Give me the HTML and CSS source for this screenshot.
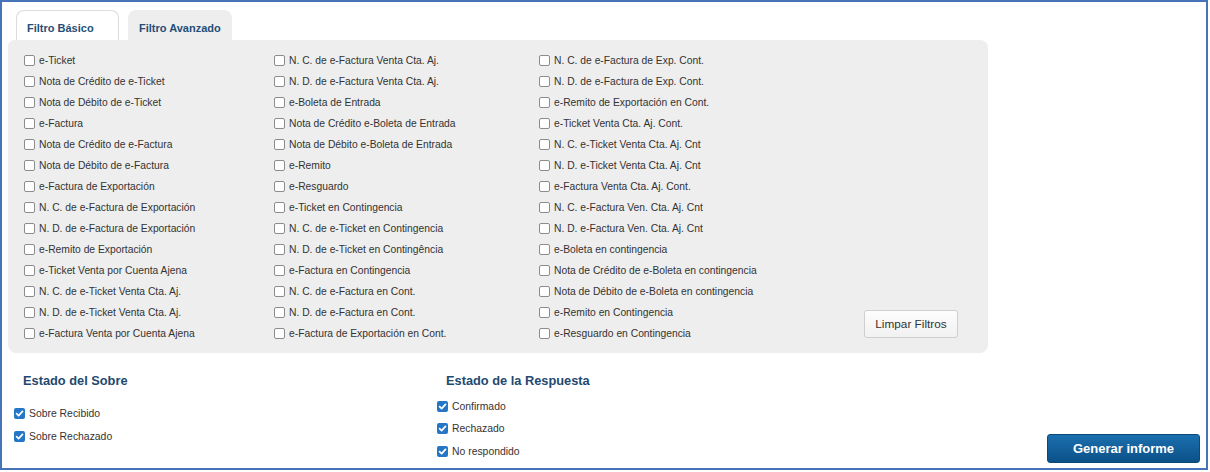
FILE: index.html
```html
<!DOCTYPE html>
<html lang="es">
<head>
<meta charset="utf-8">
<title>Filtros</title>
<link rel="stylesheet" href="styles.css">
</head>
<body>
<div class="frame">
  <div class="tabs">
    <div class="tab">Filtro Básico</div>
    <div class="tab active">Filtro Avanzado</div>
  </div>
  <div class="panel">
    <div class="col c1">
      <label class="opt"><input type="checkbox"><span>e-Ticket</span></label>
      <label class="opt"><input type="checkbox"><span>Nota de Crédito de e-Ticket</span></label>
      <label class="opt"><input type="checkbox"><span>Nota de Débito de e-Ticket</span></label>
      <label class="opt"><input type="checkbox"><span>e-Factura</span></label>
      <label class="opt"><input type="checkbox"><span>Nota de Crédito de e-Factura</span></label>
      <label class="opt"><input type="checkbox"><span>Nota de Débito de e-Factura</span></label>
      <label class="opt"><input type="checkbox"><span>e-Factura de Exportación</span></label>
      <label class="opt"><input type="checkbox"><span>N. C. de e-Factura de Exportación</span></label>
      <label class="opt"><input type="checkbox"><span>N. D. de e-Factura de Exportación</span></label>
      <label class="opt"><input type="checkbox"><span>e-Remito de Exportación</span></label>
      <label class="opt"><input type="checkbox"><span>e-Ticket Venta por Cuenta Ajena</span></label>
      <label class="opt"><input type="checkbox"><span>N. C. de e-Ticket Venta Cta. Aj.</span></label>
      <label class="opt"><input type="checkbox"><span>N. D. de e-Ticket Venta Cta. Aj.</span></label>
      <label class="opt"><input type="checkbox"><span>e-Factura Venta por Cuenta Ajena</span></label>
    </div>
    <div class="col c2">
      <label class="opt"><input type="checkbox"><span>N. C. de e-Factura Venta Cta. Aj.</span></label>
      <label class="opt"><input type="checkbox"><span>N. D. de e-Factura Venta Cta. Aj.</span></label>
      <label class="opt"><input type="checkbox"><span>e-Boleta de Entrada</span></label>
      <label class="opt"><input type="checkbox"><span>Nota de Crédito e-Boleta de Entrada</span></label>
      <label class="opt"><input type="checkbox"><span>Nota de Débito e-Boleta de Entrada</span></label>
      <label class="opt"><input type="checkbox"><span>e-Remito</span></label>
      <label class="opt"><input type="checkbox"><span>e-Resguardo</span></label>
      <label class="opt"><input type="checkbox"><span>e-Ticket en Contingencia</span></label>
      <label class="opt"><input type="checkbox"><span>N. C. de e-Ticket en Contingencia</span></label>
      <label class="opt"><input type="checkbox"><span>N. D. de e-Ticket en Contingência</span></label>
      <label class="opt"><input type="checkbox"><span>e-Factura en Contingencia</span></label>
      <label class="opt"><input type="checkbox"><span>N. C. de e-Factura en Cont.</span></label>
      <label class="opt"><input type="checkbox"><span>N. D. de e-Factura en Cont.</span></label>
      <label class="opt"><input type="checkbox"><span>e-Factura de Exportación en Cont.</span></label>
    </div>
    <div class="col c3">
      <label class="opt"><input type="checkbox"><span>N. C. de e-Factura de Exp. Cont.</span></label>
      <label class="opt"><input type="checkbox"><span>N. D. de e-Factura de Exp. Cont.</span></label>
      <label class="opt"><input type="checkbox"><span>e-Remito de Exportación en Cont.</span></label>
      <label class="opt"><input type="checkbox"><span>e-Ticket Venta Cta. Aj. Cont.</span></label>
      <label class="opt"><input type="checkbox"><span>N. C. e-Ticket Venta Cta. Aj. Cnt</span></label>
      <label class="opt"><input type="checkbox"><span>N. D. e-Ticket Venta Cta. Aj. Cnt</span></label>
      <label class="opt"><input type="checkbox"><span>e-Factura Venta Cta. Aj. Cont.</span></label>
      <label class="opt"><input type="checkbox"><span>N. C. e-Factura Ven. Cta. Aj. Cnt</span></label>
      <label class="opt"><input type="checkbox"><span>N. D. e-Factura Ven. Cta. Aj. Cnt</span></label>
      <label class="opt"><input type="checkbox"><span>e-Boleta en contingencia</span></label>
      <label class="opt"><input type="checkbox"><span>Nota de Crédito de e-Boleta en contingencia</span></label>
      <label class="opt"><input type="checkbox"><span>Nota de Débito de e-Boleta en contingencia</span></label>
      <label class="opt"><input type="checkbox"><span>e-Remito en Contingencia</span></label>
      <label class="opt"><input type="checkbox"><span>e-Resguardo en Contingencia</span></label>
    </div>
    <button class="btn-clear" type="button">Limpar Filtros</button>
  </div>
  <div class="bottom">
    <div class="group g-sobre">
      <h3 class="title">Estado del Sobre</h3>
      <div class="checks">
        <label class="chk"><span class="box"><svg viewBox="0 0 11 11" width="11" height="11"><path d="M2.6 5.7 L4.6 7.6 L8.5 3.4" fill="none" stroke="#fff" stroke-width="1.7" stroke-linecap="round" stroke-linejoin="round"/></svg></span><span>Sobre Recibido</span></label>
        <label class="chk"><span class="box"><svg viewBox="0 0 11 11" width="11" height="11"><path d="M2.6 5.7 L4.6 7.6 L8.5 3.4" fill="none" stroke="#fff" stroke-width="1.7" stroke-linecap="round" stroke-linejoin="round"/></svg></span><span>Sobre Rechazado</span></label>
      </div>
    </div>
    <div class="group g-resp">
      <h3 class="title">Estado de la Respuesta</h3>
      <div class="checks">
        <label class="chk"><span class="box"><svg viewBox="0 0 11 11" width="11" height="11"><path d="M2.6 5.7 L4.6 7.6 L8.5 3.4" fill="none" stroke="#fff" stroke-width="1.7" stroke-linecap="round" stroke-linejoin="round"/></svg></span><span>Confirmado</span></label>
        <label class="chk"><span class="box"><svg viewBox="0 0 11 11" width="11" height="11"><path d="M2.6 5.7 L4.6 7.6 L8.5 3.4" fill="none" stroke="#fff" stroke-width="1.7" stroke-linecap="round" stroke-linejoin="round"/></svg></span><span>Rechazado</span></label>
        <label class="chk"><span class="box"><svg viewBox="0 0 11 11" width="11" height="11"><path d="M2.6 5.7 L4.6 7.6 L8.5 3.4" fill="none" stroke="#fff" stroke-width="1.7" stroke-linecap="round" stroke-linejoin="round"/></svg></span><span>No respondido</span></label>
      </div>
    </div>
    <button class="btn-gen" type="button">Generar informe</button>
  </div>
</div>
</body>
</html>
```
FILE: styles.css
```css
* { box-sizing: border-box; }
html, body { margin: 0; padding: 0; background: #fff; }
body {
  font-family: "Liberation Sans", Arial, sans-serif;
  color: #333;
  width: 1210px;
  height: 472px;
  overflow: hidden;
}
.frame {
  width: 1208px;
  height: 470px;
  border: 2px solid #4773b9;
  padding: 8px 0 0 6px;
  display: flex;
  flex-direction: column;
}
.tabs {
  display: flex;
  gap: 9px;
  margin-left: 8px;
  height: 30px;
}
.tab {
  width: 103px;
  height: 30px;
  border: 1px solid #dcdcdc;
  border-bottom: none;
  border-radius: 8px 8px 0 0;
  background: #fff;
  font-size: 11px;
  font-weight: bold;
  color: #1f4f78;
  padding: 11px 0 0 10px;
  line-height: 12px;
}
.tab.active {
  width: 104px;
  background: #eeeeee;
  border-color: #eeeeee;
}
.panel {
  width: 980px;
  height: 313px;
  background: #eeeeee;
  border-radius: 6px 8px 8px 8px;
  padding: 10px 30px 9px 16px;
  display: flex;
  align-items: flex-start;
}
.col { display: flex; flex-direction: column; }
.c1 { width: 250px; }
.c2 { width: 265px; }
.c3 { width: 260px; }
.opt {
  height: 21px;
  display: flex;
  align-items: center;
  font-size: 10.3px;
  color: #333;
  white-space: nowrap;
}
.opt input {
  appearance: none;
  -webkit-appearance: none;
  margin: 0 4px 0 0;
  width: 11px;
  height: 11px;
  border: 1px solid #8c8c8c;
  border-radius: 2px;
  background: #fff;
  flex: none;
}
.btn-clear {
  margin-left: auto;
  align-self: flex-end;
  margin-bottom: 6px;
  width: 94px;
  height: 28px;
  background: linear-gradient(#fdfdfd, #f1f1f1);
  border: 1px solid #cfcfcf;
  border-radius: 3px;
  font-family: "Liberation Sans", Arial, sans-serif;
  font-size: 11.8px;
  color: #333;
  padding: 0;
}
.bottom {
  flex: 1;
  display: flex;
  align-items: flex-start;
  padding-left: 6px;
}
.group { display: flex; flex-direction: column; }
.g-sobre { width: 423px; }
.title {
  margin: 20px 0 0 0;
  padding-left: 9px;
  font-size: 12.8px;
  line-height: 16px;
  font-weight: bold;
  color: #22496f;
}
.g-sobre .checks { margin-top: 13px; }
.g-resp .checks { margin-top: 6px; }
.g-resp .chk { height: 22.5px; }
.chk {
  height: 23px;
  display: flex;
  align-items: center;
  font-size: 10.4px;
  color: #333;
  white-space: nowrap;
}
.box {
  width: 11px;
  height: 11px;
  border-radius: 2px;
  background: #2577c6;
  margin-right: 4px;
  display: flex;
  flex: none;
}
.box svg { display: block; }
.btn-gen {
  margin-left: auto;
  align-self: flex-end;
  margin-right: 6px;
  margin-bottom: 5px;
  width: 153px;
  height: 29px;
  border: 1px solid #0b4a78;
  border-radius: 3px;
  background: linear-gradient(#1a6fae, #0c5189);
  color: #fff;
  font-family: "Liberation Sans", Arial, sans-serif;
  font-size: 13px;
  font-weight: bold;
  padding: 0;
}
```
